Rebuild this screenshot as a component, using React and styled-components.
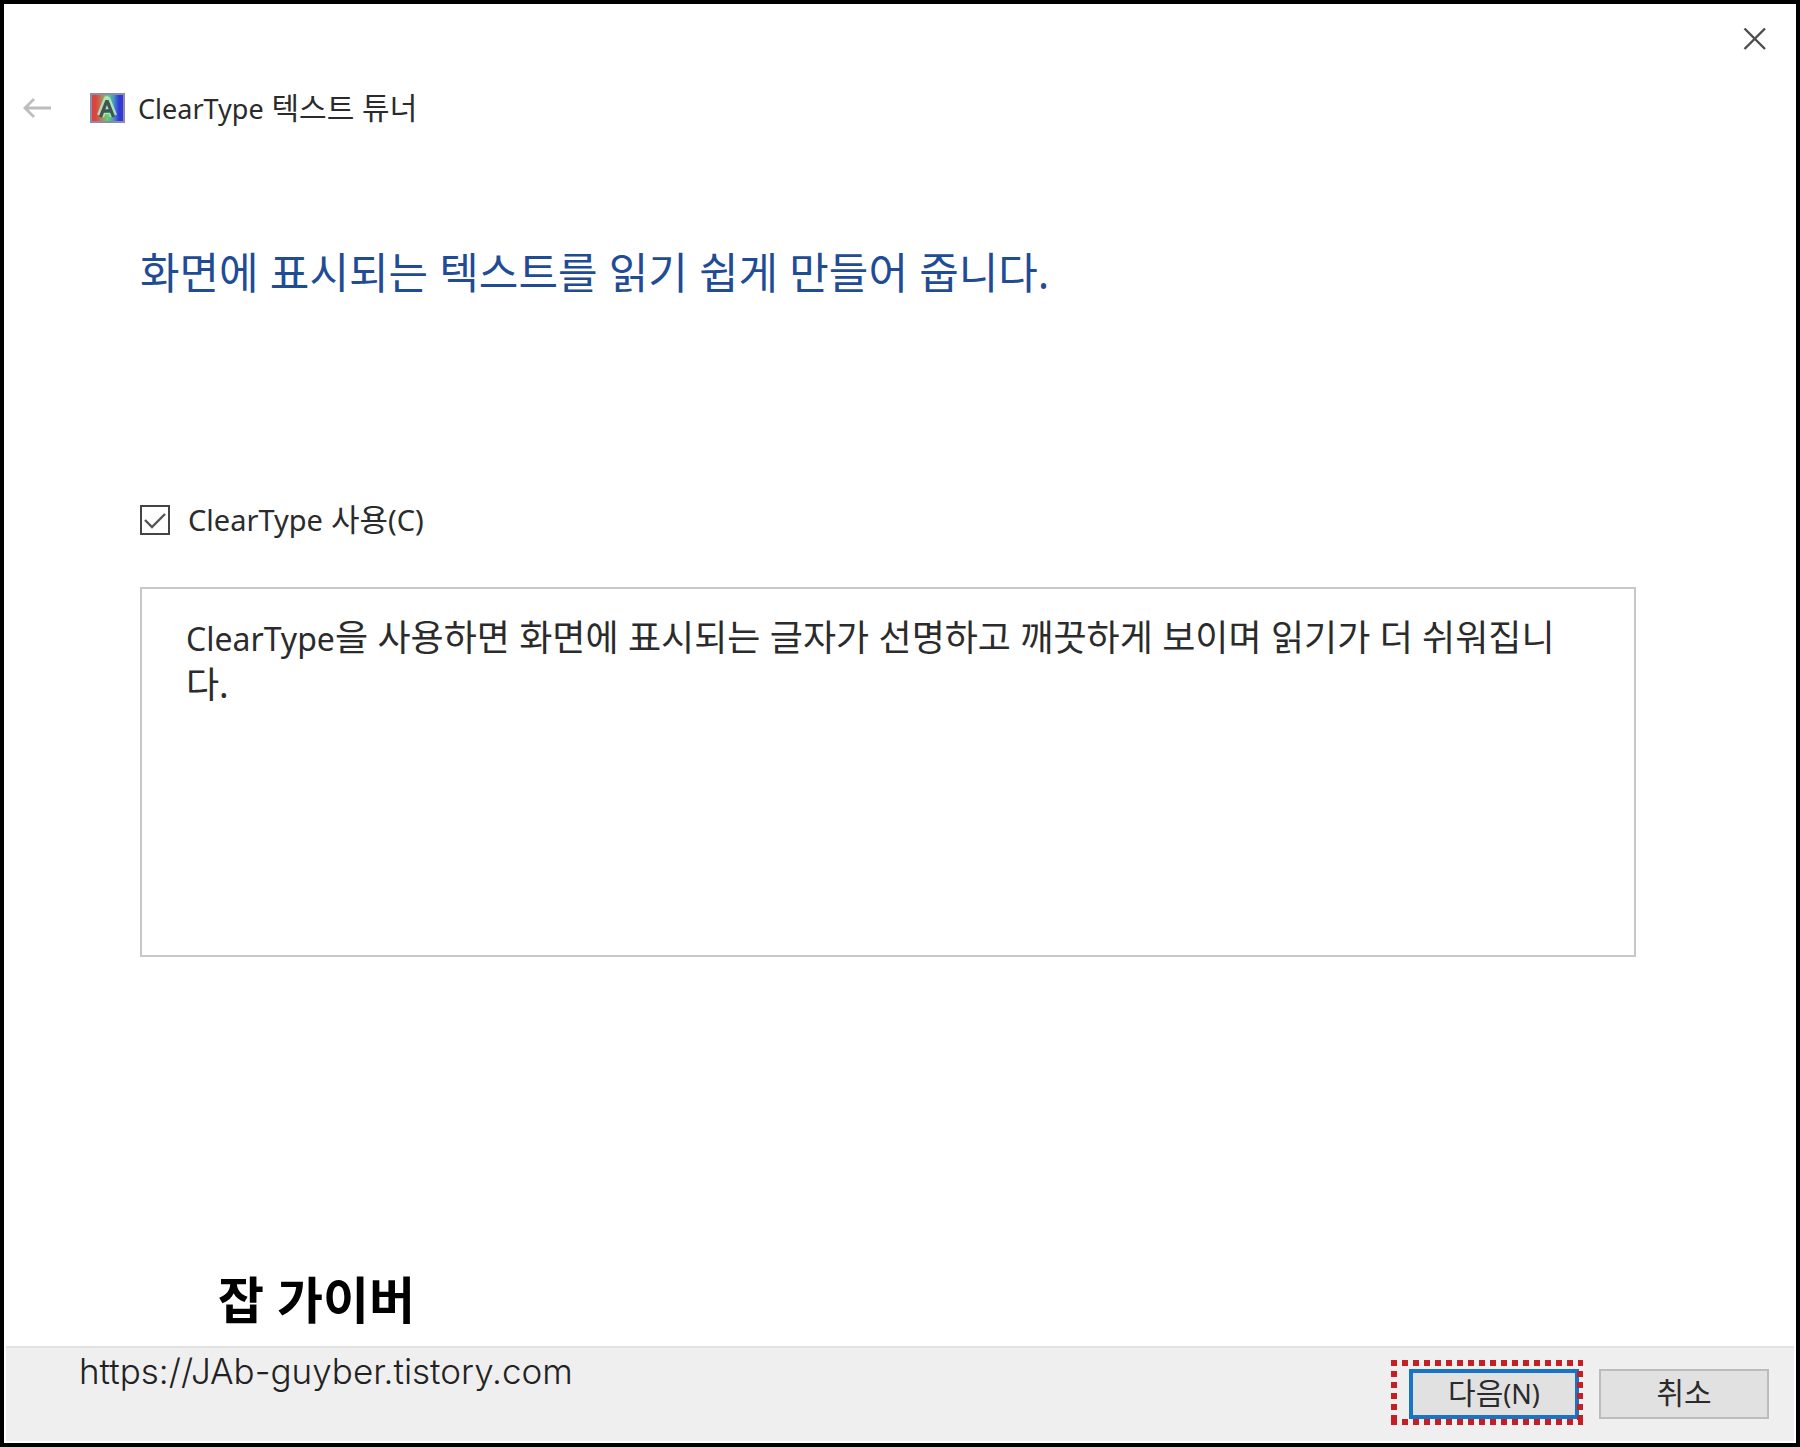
import React, { useState } from "react";
import styled, { createGlobalStyle } from "styled-components";

const App = () => {
  const [enabled, setEnabled] = useState(true);

  return (
    <>
      <GlobalStyle />
      <Wizard>
        <TitleBar>
          <IconButton type="button" aria-label="닫기">
            <CloseIcon />
          </IconButton>
        </TitleBar>
        <Header>
          <IconButton type="button" aria-label="뒤로" disabled>
            <BackIcon />
          </IconButton>
          <AppIcon />
          <AppTitle>
            <Latin $size={27}>ClearType</Latin> 텍스트 튜너
          </AppTitle>
        </Header>
        <Main>
          <Heading>화면에 표시되는 텍스트를 읽기 쉽게 만들어 줍니다.</Heading>
          <Option>
            <Checkbox
              id="cleartype"
              type="checkbox"
              checked={enabled}
              onChange={(e) => setEnabled(e.target.checked)}
            />
            <OptionLabel htmlFor="cleartype">
              <Latin $size={29}>ClearType</Latin> 사용
              <Latin $size={29}>(C)</Latin>
            </OptionLabel>
          </Option>
          <Description>
            <Latin $size={32}>ClearType</Latin>을 사용하면 화면에 표시되는
            글자가 선명하고 깨끗하게 보이며 읽기가 더 쉬워집니다.
          </Description>
          <Brand>잡 가이버</Brand>
        </Main>
        <Footer>
          <SiteLink href="https://JAb-guyber.tistory.com">
            https://JAb-guyber.tistory.com
          </SiteLink>
          <Actions>
            <Highlight>
              <Button type="button" $primary>
                다음<Latin $size={27}>(N)</Latin>
              </Button>
              <DottedFrame />
            </Highlight>
            <Button type="button">취소</Button>
          </Actions>
        </Footer>
      </Wizard>
    </>
  );
};

export default App;

const CloseIcon = () => (
  <svg width="24" height="24" viewBox="0 0 24 24" aria-hidden="true">
    <path d="M1.5 1.5 22 22M22 1.5 1.5 22" stroke="#4c4c4c" strokeWidth="2.4" />
  </svg>
);

const BackIcon = () => (
  <svg width="30" height="22" viewBox="0 0 30 22" aria-hidden="true">
    <path
      d="M29 11H3M12 2 3 11l9 9"
      fill="none"
      stroke="#bdbdbd"
      strokeWidth="2.8"
    />
  </svg>
);

const AppIcon = () => (
  <svg width="35" height="30" viewBox="0 0 35 30" aria-hidden="true">
    <defs>
      <linearGradient id="rgb">
        <stop offset="0.15" stopColor="#dc4440" />
        <stop offset="0.34" stopColor="#b08a5c" />
        <stop offset="0.5" stopColor="#5ed56a" />
        <stop offset="0.68" stopColor="#4d96c4" />
        <stop offset="0.85" stopColor="#3038d8" />
      </linearGradient>
    </defs>
    <rect x="1" y="1" width="33" height="28" fill="url(#rgb)" />
    <rect
      x="1"
      y="1"
      width="33"
      height="28"
      fill="none"
      stroke="#8c8ca8"
      strokeWidth="2"
    />
    <path
      d="M10.5 23 17 7l6.5 16M13 17.5h8"
      fill="none"
      stroke="#b9ecc4"
      strokeWidth="7.5"
      strokeLinejoin="round"
      opacity="0.85"
    />
    <path
      d="M10.5 24 17 7.5 23.5 24M13 18h8"
      fill="none"
      stroke="#3f5653"
      strokeWidth="3.4"
      strokeLinejoin="bevel"
    />
  </svg>
);

const DottedFrame = () => (
  <Dots aria-hidden="true">
    <line x1="0" y1="3" x2="100%" y2="3" />
    <line x1="0" y1="62" x2="100%" y2="62" />
    <line x1="3" y1="11" x2="3" y2="60" />
    <line x1="189" y1="11" x2="189" y2="60" />
  </Dots>
);

const GlobalStyle = createGlobalStyle`
  * {
    box-sizing: border-box;
  }
  body {
    margin: 0;
    background-color: white;
    color: #2b2b2b;
    font-family: "Noto Sans", "Noto Sans CJK KR", sans-serif;
  }
  button {
    font-family: inherit;
    color: inherit;
  }
`;

const Wizard = styled.div`
  display: flex;
  flex-direction: column;
  min-height: 100vh;
  border: 4px solid black;
  padding-bottom: 2px;
`;

const TitleBar = styled.div`
  display: flex;
  justify-content: flex-end;
  padding: 23px 29px 0 0;
`;

const IconButton = styled.button`
  display: flex;
  align-items: center;
  justify-content: center;
  padding: 0;
  border: none;
  background: none;
`;

const Header = styled.header`
  display: flex;
  align-items: center;
  height: 44px;
  margin-top: 35px;
  padding-left: 18px;
  > svg {
    margin: 0 13px 0 38px;
  }
`;

const AppTitle = styled.span`
  font-size: 30px;
  line-height: 44px;
`;

const Latin = styled.span`
  font-size: ${(props) => props.$size}px;
`;

const Main = styled.main`
  display: flex;
  flex: 1;
  flex-direction: column;
  padding: 111px 160px 0 136px;
`;

const Heading = styled.h1`
  margin: 0;
  color: #1f4c94;
  font-size: 43px;
  font-weight: 400;
  line-height: 64px;
`;

const Option = styled.div`
  display: flex;
  align-items: center;
  margin-top: 192px;
`;

const Checkbox = styled.input`
  appearance: none;
  width: 30px;
  height: 30px;
  margin: 0 18px 0 0;
  border: 2px solid #444;
  background: white;
  &:checked {
    background: white
      url("data:image/svg+xml,%3Csvg xmlns='http://www.w3.org/2000/svg' viewBox='0 0 26 26'%3E%3Cpath d='M3 13l7 7L23 7' fill='none' stroke='%23555' stroke-width='2.4'/%3E%3C/svg%3E")
      center / 100% no-repeat;
  }
`;

const OptionLabel = styled.label`
  font-size: 31px;
  line-height: 44px;
`;

const Description = styled.p`
  min-height: 370px;
  margin: 45px 0 0;
  padding: 26px 44px;
  border: 2px solid #c8c8c8;
  font-size: 36px;
  line-height: 46px;
`;

const Brand = styled.strong`
  margin-top: auto;
  padding: 0 0 14px 78px;
  color: black;
  font-size: 50px;
  font-weight: 700;
  line-height: 64px;
`;

const Footer = styled.footer`
  display: flex;
  align-items: flex-start;
  justify-content: space-between;
  height: 95px;
  margin: 0 2px;
  padding: 0 25px 0 73px;
  border-top: 2px solid #e2e2e2;
  background-color: #efefef;
`;

const SiteLink = styled.a`
  color: #222;
  font-family: Inter, "Noto Sans CJK KR", sans-serif;
  font-size: 35px;
  font-weight: 300;
  line-height: 46px;
  text-decoration: none;
`;

const Actions = styled.div`
  display: flex;
  gap: 20px;
  padding-top: 21px;
`;

const Highlight = styled.div`
  position: relative;
`;

const Button = styled.button`
  display: block;
  width: 170px;
  height: 50px;
  padding: 0 0 2px;
  border: ${(props) =>
    props.$primary ? "4px solid #1874c4" : "2px solid #bcbcbc"};
  background-color: #e1e1e1;
  font-size: 30px;
  line-height: 40px;
`;

const Dots = styled.svg`
  position: absolute;
  top: -9px;
  left: -18px;
  width: 192px;
  height: 65px;
  pointer-events: none;
  > line {
    stroke: #c41f25;
    stroke-width: 6px;
    stroke-dasharray: 6 5;
  }
`;
